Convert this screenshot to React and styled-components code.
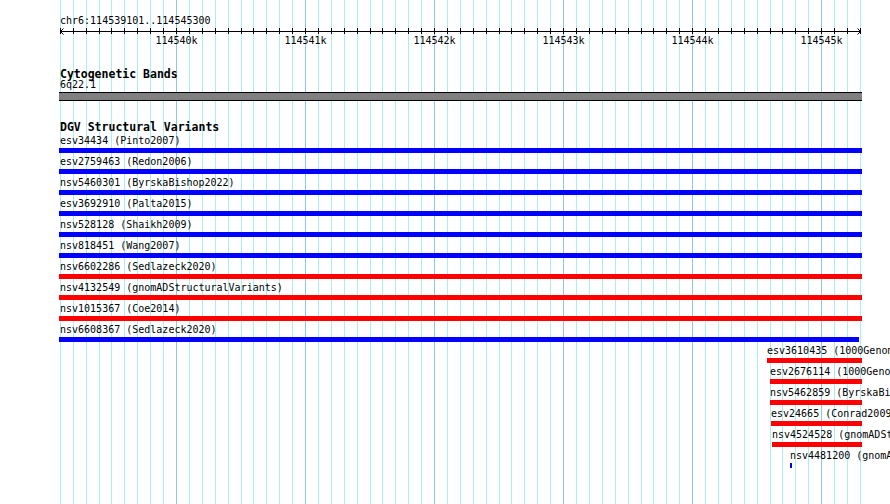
import React from 'react';
import styled, { createGlobalStyle } from 'styled-components';

const VIEW_START = 114539101;
const VIEW_END = 114545300;
const ORIGIN = 60;
const PX_PER_BP = 800 / 6200;
const TRACK_LEFT = 59;
const TRACK_RIGHT = 862;

const toX = (bp) => Math.round(ORIGIN + (bp - VIEW_START) * PX_PER_BP);

const GlobalStyle = createGlobalStyle`
  html, body {
    margin: 0;
    padding: 0;
    background: #fff;
  }
  body {
    font-family: "DejaVu Sans Mono", "Liberation Mono", monospace;
    font-size: 10px;
    color: #000;
  }
`;

const Browser = styled.div`
  position: relative;
  width: 890px;
  height: 504px;
  overflow: hidden;
  background: #fff;
`;

const GridLayer = styled.svg`
  position: absolute;
  top: 0;
  left: 0;
  width: 890px;
  height: 504px;
  z-index: 0;
`;

const Content = styled.div`
  position: relative;
  z-index: 1;
  padding-top: 16px;
`;

const Locus = styled.div`
  margin-left: 60px;
  height: 10px;
  line-height: 10px;
  white-space: nowrap;
`;

const Axis = styled.svg`
  display: block;
  width: 890px;
  height: 10px;
`;

const TickLabels = styled.div`
  position: relative;
  height: 10px;
  line-height: 10px;
`;

const TickLabel = styled.span`
  position: absolute;
  top: 0;
  transform: translateX(-50%);
  white-space: nowrap;
`;

const Track = styled.section`
  margin-top: ${(p) => p.$gap}px;
`;

const TrackTitle = styled.h3`
  margin: 0 0 0 60px;
  height: 11px;
  font-size: 11.5px;
  line-height: 11px;
  font-weight: bold;
  white-space: nowrap;
`;

const BandName = styled.div`
  margin-left: 60px;
  height: 10px;
  line-height: 10px;
`;

const Band = styled.div`
  margin: 2px 0 0 ${TRACK_LEFT}px;
  width: ${TRACK_RIGHT - TRACK_LEFT}px;
  height: 7px;
  background: #808080;
  border-top: 1px solid #000;
  border-bottom: 1px solid #000;
`;

const Rows = styled.div`
  margin-top: 3px;
`;

const Row = styled.div`
  height: 21px;
`;

const Feature = styled.div`
  display: flex;
  flex-direction: column;
  align-items: flex-start;
`;

const FeatureLabel = styled.div`
  height: 10px;
  line-height: 10px;
  white-space: nowrap;
`;

const FeatureBar = styled.div`
  margin-top: 2px;
  height: 5px;
  background: ${(p) => (p.$kind === 'loss' ? '#ff0000' : '#0000ff')};
`;

const gridPositions = [];
for (let bp = 114539100; bp <= VIEW_END; bp += 100) {
  gridPositions.push({ bp, x: toX(bp) + 0.5, major: bp % 1000 === 0 });
}
const majors = gridPositions.filter((g) => g.major);

const variants = [
  { name: 'esv34434', study: 'Pinto2007', kind: 'gain', start: 114530000, end: 114550000 },
  { name: 'esv2759463', study: 'Redon2006', kind: 'gain', start: 114530000, end: 114550000 },
  { name: 'nsv5460301', study: 'ByrskaBishop2022', kind: 'gain', start: 114530000, end: 114550000 },
  { name: 'esv3692910', study: 'Palta2015', kind: 'gain', start: 114530000, end: 114550000 },
  { name: 'nsv528128', study: 'Shaikh2009', kind: 'gain', start: 114530000, end: 114550000 },
  { name: 'nsv818451', study: 'Wang2007', kind: 'gain', start: 114530000, end: 114550000 },
  { name: 'nsv6602286', study: 'Sedlazeck2020', kind: 'loss', start: 114530000, end: 114550000 },
  { name: 'nsv4132549', study: 'gnomADStructuralVariants', kind: 'loss', start: 114530000, end: 114550000 },
  { name: 'nsv1015367', study: 'Coe2014', kind: 'loss', start: 114530000, end: 114550000 },
  { name: 'nsv6608367', study: 'Sedlazeck2020', kind: 'gain', start: 114530000, end: 114545293 },
  { name: 'esv3610435', study: '1000GenomesConsortiumPhase3', kind: 'loss', start: 114544580, end: 114550000 },
  { name: 'esv2676114', study: '1000GenomesConsortiumPilotProject', kind: 'loss', start: 114544603, end: 114550000 },
  { name: 'nsv5462859', study: 'ByrskaBishop2022', kind: 'loss', start: 114544603, end: 114550000 },
  { name: 'esv24665', study: 'Conrad2009', kind: 'loss', start: 114544611, end: 114550000 },
  { name: 'nsv4524528', study: 'gnomADStructuralVariants', kind: 'loss', start: 114544618, end: 114550000 },
  { name: 'nsv4481200', study: 'gnomADStructuralVariants', kind: 'gain', start: 114544758, end: 114544773 },
];

const Grid = () => (
  <GridLayer viewBox="0 0 890 504" shapeRendering="crispEdges">
    {gridPositions.map((g) => (
      <line
        key={g.bp}
        x1={g.x}
        x2={g.x}
        y1={0}
        y2={504}
        stroke={g.major ? '#8cc8ec' : '#a8eef2'}
        strokeWidth={1}
      />
    ))}
  </GridLayer>
);

const Ruler = () => (
  <>
    <Locus>chr6:114539101..114545300</Locus>
    <Axis viewBox="0 0 890 10" shapeRendering="crispEdges">
      <line x1={60} x2={861} y1={5.5} y2={5.5} stroke="#000" />
      {gridPositions.map((g) => (
        <line key={g.bp} x1={g.x} x2={g.x} y1={2} y2={8} stroke="#000" />
      ))}
      <polyline points="63.5,2.5 60.5,5.5 63.5,8.5" fill="none" stroke="#000" shapeRendering="auto" />
      <polyline points="857.5,2.5 860.5,5.5 857.5,8.5" fill="none" stroke="#000" shapeRendering="auto" />
    </Axis>
    <TickLabels>
      {majors.map((g) => (
        <TickLabel key={g.bp} style={{ left: g.x }}>
          {g.bp / 1000}k
        </TickLabel>
      ))}
    </TickLabels>
  </>
);

const VariantRow = ({ v }) => {
  const left = Math.max(toX(v.start), TRACK_LEFT);
  const right = Math.min(toX(v.end), TRACK_RIGHT);
  const labelLeft = Math.max(left, ORIGIN);
  return (
    <Row>
      <Feature style={{ marginLeft: left }}>
        <FeatureLabel style={{ marginLeft: labelLeft - left }}>
          {v.name} ({v.study})
        </FeatureLabel>
        <FeatureBar $kind={v.kind} style={{ width: Math.max(right - left, 2) }} />
      </Feature>
    </Row>
  );
};

const App = () => (
  <Browser>
    <GlobalStyle />
    <Grid />
    <Content>
      <Ruler />
      <Track $gap={23}>
        <TrackTitle>Cytogenetic Bands</TrackTitle>
        <BandName>6q22.1</BandName>
        <Band />
      </Track>
      <Track $gap={21}>
        <TrackTitle>DGV Structural Variants</TrackTitle>
        <Rows>
          {variants.map((v) => (
            <VariantRow key={v.name} v={v} />
          ))}
        </Rows>
      </Track>
    </Content>
  </Browser>
);

export default App;
